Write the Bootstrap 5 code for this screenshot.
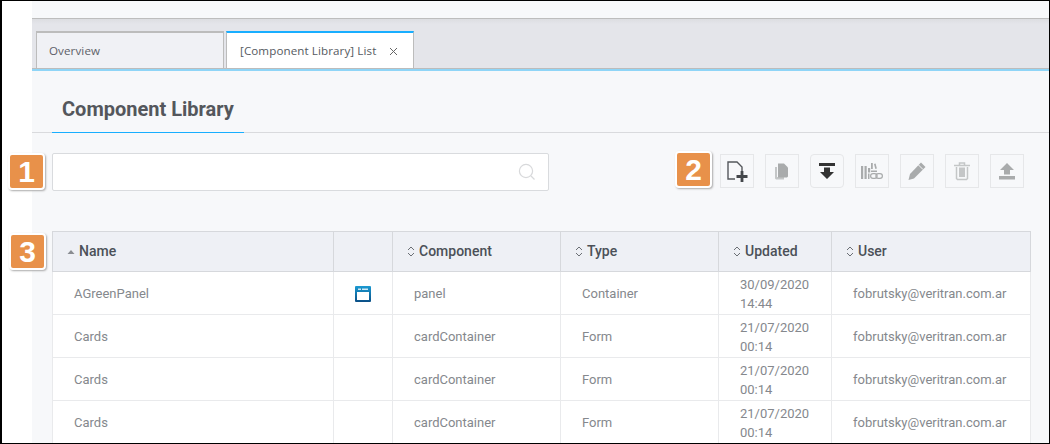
<!DOCTYPE html>
<html lang="en">
<head>
    <meta charset="UTF-8">
    <title>Component Library</title>
    <link href="https://cdn.jsdelivr.net/npm/bootstrap@5.3.0/dist/css/bootstrap.min.css" rel="stylesheet">
    <style>
        html, body { margin: 0; height: 100%; overflow: hidden; background: #fff; }
        .shot-frame { width: 1050px; height: 444px; border: 1px solid #000; border-width: 1px 1px 1px 2px; overflow: hidden; display: flex; background: #fff; font-family: Roboto, sans-serif; }
        .shot-gutter { width: 30px; flex: none; background: #fff; }
        .shot-main { flex: 1; min-width: 0; background: #f7f8fa; }
        .top-strip { height: 18px; background: #f7f8fa; border-bottom: 1px solid #bdbdbd; }
        .tab-strip { height: 52px; padding: 12px 0 0 4px; gap: 2px; background: linear-gradient(#dcdde1, #e4e5ea 5px); border-bottom: 2px solid #8fd5f7; box-shadow: inset 0 -1px #bcbcbc; box-sizing: border-box; }
        .tab-item { width: 188px; height: 38px; padding-left: 12px; border: 1px solid #bcbcbc; border-top-width: 2px; background: #f0f1f5; color: #5c6068; font: 11.600px "Open Sans", sans-serif; letter-spacing: .1px; }
        .tab-item.tab-on { background: #fff; border-top-color: #18aeff; color: #555a61; padding-left: 13px; }
        .tab-x { margin-left: 13px; margin-top: 2px; }
        .title-row { height: 62px; border-bottom: 1px solid #d9dadd; padding-left: 20px; }
        .title-text { width: 192px; height: 62px; padding: 26px 0 0 10px; margin: 0; border-bottom: 1px solid #18aeff; color: #54575c; font: 700 20px/24px Roboto, sans-serif; white-space: nowrap; }
        .tool-row { padding: 20px 20px 0 20px; height: 98px; }
        .search-box { width: 497px; height: 38px; background: #fff; border: 1px solid #d9dbde; border-radius: 2px; padding-right: 12px; }
        .tool-btn { width: 34px; height: 34px; padding: 0; border: 1px solid #e6e7e9; border-radius: 0; background: transparent; display: flex; align-items: center; justify-content: center; }
        .tool-btn.tool-round { border-radius: 4px; }
        .tool-group { gap: 11px; margin: 1px 5px 0 0; }
        .step-tag { position: absolute; width: 37px; height: 37px; background: #e8914a; border: 2px solid #fff; border-radius: 4px; box-shadow: 1px 1px 2px #aaa; color: #fff; font: 700 30px/33px "Liberation Sans", sans-serif; text-align: center; }
        .list-wrap { padding: 0 19px 0 20px; }
        .comp-table { table-layout: fixed; width: 979px; margin: 0; border-collapse: collapse; font-size: 13px; }
        .comp-table th { height: 40px; padding: 0 0 0 14px; background: #eef0f5; border: 1px solid #d6d8dc; color: #4b5058; font-weight: 500; font-size: 14px; vertical-align: middle; }
        .comp-table td { height: 43px; padding: 0 0 0 21px; background: #fff; border: 1px solid #e9eaec; color: #85888d; line-height: 19px; vertical-align: middle; }
        .comp-table td.cell-date { padding-top: 1px; }
        .sort-mark { display: inline-block; vertical-align: -1px; margin-right: 4px; }
    </style>
</head>
<body>
<div class="shot-frame">
    <div class="shot-gutter"></div>
    <div class="shot-main">
        <div class="top-strip"></div>
        <div class="tab-strip d-flex">
            <div class="tab-item d-flex align-items-center">Overview</div>
            <div class="tab-item tab-on d-flex align-items-center">[Component Library] List
                <svg class="tab-x" width="9" height="9" viewBox="0 0 9 9"><path d="M1 1l7 7M8 1L1 8" stroke="#666" fill="none"/></svg>
            </div>
        </div>
        <div class="title-row"><h1 class="title-text">Component Library</h1></div>
        <div class="tool-row d-flex justify-content-between align-items-start">
            <div class="search-box position-relative d-flex align-items-center justify-content-end">
                <span class="step-tag" style="left:-45px;top:-1px">1</span>
                <svg width="18" height="18" viewBox="0 0 18 18"><circle cx="8" cy="8" r="6.600" fill="none" stroke="#d8d9db" stroke-width="1.200"/><path d="M13 13l3.500 3.500" stroke="#d8d9db" stroke-width="1.200"/></svg>
            </div>
            <div class="tool-group d-flex position-relative">
                <span class="step-tag" style="left:-45px;top:-3px">2</span>
                <button class="tool-btn" type="button"><svg width="24" height="24" viewBox="0 0 24 24"><path d="M10 20H3V3h9l5 5v5" fill="none" stroke="#55585c" stroke-width="1.400"/><path d="M17 12v11M11.500 17.500h11" stroke="#44474b" stroke-width="2.800"/></svg></button>
                <button class="tool-btn" type="button"><svg width="16" height="17" viewBox="0 0 16 17"><path d="M1 4h2v10h7v2.500H2l-1-1z" fill="#c4c6c7"/><path d="M4 .500h6l4 4v9l-1 1H4z" fill="#a9abac"/></svg></button>
                <button class="tool-btn tool-round" type="button"><svg width="18" height="18" viewBox="0 0 18 18"><path d="M1 1h16v3H1z" fill="#333"/><path d="M6 5.500h6V10h4l-7 7-7-7h4z" fill="#333"/></svg></button>
                <button class="tool-btn" type="button"><svg width="22" height="16" viewBox="0 0 22 16"><path d="M0 3h2.200v13H0zM3.500 3h2.200v13H3.500zM7 5h2.200v4.500H7zM7 10.500h1.500V16H7z" fill="#a9abac"/><path d="M10 0h1.800v6H10zM13 1l1.600-.4 1.300 5-1.600.4zM10 7.500h6V9h-6z" fill="#a9abac"/><rect x="9.600" y="10.600" width="6.500" height="4.800" rx="2.400" fill="none" stroke="#a9abac" stroke-width="1.200"/><rect x="14.900" y="10.600" width="6.500" height="4.800" rx="2.400" fill="none" stroke="#a9abac" stroke-width="1.200"/></svg></button>
                <button class="tool-btn" type="button"><svg width="20" height="20" viewBox="0 0 20 20"><path d="M14 1.500l4.500 4.500L7 17.500 1.500 19 3 13z" fill="#a9abac"/><path d="M11.500 4l4.500 4.500" stroke="#f7f8fa"/></svg></button>
                <button class="tool-btn" type="button"><svg width="18" height="20" viewBox="0 0 18 20"><path d="M1 4.500h16M6.500 4V2h5v2" fill="none" stroke="#c4c6c7" stroke-width="1.500"/><path d="M3.500 6v11.500l1 1h9l1-1V6" fill="none" stroke="#c4c6c7" stroke-width="1.500"/><path d="M6 6.500h6V16H6z" fill="#c4c6c7"/></svg></button>
                <button class="tool-btn" type="button"><svg width="18" height="18" viewBox="0 0 18 18"><path d="M9 1l7 7h-4v4.500H6V8H2z" fill="#a9abac"/><path d="M1 14h16v3.500H1z" fill="#a9abac"/></svg></button>
            </div>
        </div>
        <div class="list-wrap position-relative">
            <span class="step-tag" style="left:-23px;top:2px">3</span>
            <table class="table comp-table">
                <colgroup><col style="width:281px"><col style="width:59px"><col style="width:168px"><col style="width:158px"><col style="width:113px"><col style="width:199px"></colgroup>
                <thead>
                    <tr>
                        <th><svg class="sort-mark" width="8" height="9" viewBox="0 0 8 9"><path d="M4 2l3.500 4h-7z" fill="#8a8d92"/></svg>Name</th>
                        <th></th>
                        <th><svg class="sort-mark" width="8" height="11" viewBox="0 0 8 11"><path d="M1 4l3-3 3 3M1 7l3 3 3-3" fill="none" stroke="#6b6f75"/></svg>Component</th>
                        <th><svg class="sort-mark" width="8" height="11" viewBox="0 0 8 11"><path d="M1 4l3-3 3 3M1 7l3 3 3-3" fill="none" stroke="#6b6f75"/></svg>Type</th>
                        <th><svg class="sort-mark" width="8" height="11" viewBox="0 0 8 11"><path d="M1 4l3-3 3 3M1 7l3 3 3-3" fill="none" stroke="#6b6f75"/></svg>Updated</th>
                        <th><svg class="sort-mark" width="8" height="11" viewBox="0 0 8 11"><path d="M1 4l3-3 3 3M1 7l3 3 3-3" fill="none" stroke="#6b6f75"/></svg>User</th>
                    </tr>
                </thead>
                <tbody>
                    <tr>
                        <td>AGreenPanel</td>
                        <td><svg width="16" height="16" viewBox="0 0 16 16"><defs><linearGradient id="winfill" x1="0" y1="0" x2="0" y2="1"><stop offset="0" stop-color="#1b9ad2"/><stop offset="1" stop-color="#0b4f86"/></linearGradient></defs><rect width="16" height="16" rx="1" fill="url(#winfill)"/><rect x="2" y="6" width="12" height="8" fill="#fff"/><rect x="3" y="2.500" width="3" height="1.500" fill="#cfeaf6"/><rect x="7" y="2.500" width="6" height="1.500" fill="#cfeaf6"/></svg></td>
                        <td>panel</td><td>Container</td><td class="cell-date">30/09/2020<br>14:44</td><td>fobrutsky@veritran.com.ar</td>
                    </tr>
                    <tr><td>Cards</td><td></td><td>cardContainer</td><td>Form</td><td class="cell-date">21/07/2020<br>00:14</td><td>fobrutsky@veritran.com.ar</td></tr>
                    <tr><td>Cards</td><td></td><td>cardContainer</td><td>Form</td><td class="cell-date">21/07/2020<br>00:14</td><td>fobrutsky@veritran.com.ar</td></tr>
                    <tr><td>Cards</td><td></td><td>cardContainer</td><td>Form</td><td class="cell-date">21/07/2020<br>00:14</td><td>fobrutsky@veritran.com.ar</td></tr>
                </tbody>
            </table>
        </div>
    </div>
</div>
<script src="https://cdn.jsdelivr.net/npm/bootstrap@5.3.0/dist/js/bootstrap.bundle.min.js"></script>
</body>
</html>
